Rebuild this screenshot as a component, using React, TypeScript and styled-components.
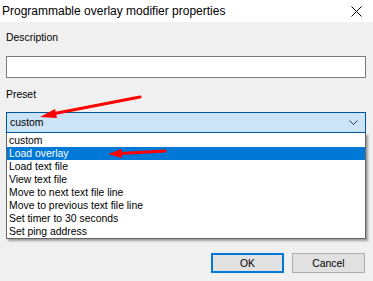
import styled, { createGlobalStyle } from 'styled-components';

const GlobalStyle = createGlobalStyle`
  html, body {
    margin: 0;
    padding: 0;
    background: #f0f0f0;
  }
  body {
    font-family: 'Liberation Sans', Arial, sans-serif;
    font-size: 10.4px;
    color: #000;
  }
`;

const presets = [
  'custom',
  'Load overlay',
  'Load text file',
  'View text file',
  'Move to next text file line',
  'Move to previous text file line',
  'Set timer to 30 seconds',
  'Set ping address',
];

export default function App() {
  return (
    <Dialog>
      <GlobalStyle />
      <TitleBar>
        <Title>Programmable overlay modifier properties</Title>
        <CloseButton>
          <svg width="11" height="11" viewBox="0 0 11 11">
            <path d="M0.5 0.5 L10.5 10.5 M10.5 0.5 L0.5 10.5" stroke="#000" strokeWidth="1" />
          </svg>
        </CloseButton>
      </TitleBar>

      <Body>
        <Label>Description</Label>
        <TextInput />

        <Label $top={9}>Preset</Label>
        <SelectWrap>
          <Select>
            <span>custom</span>
            <svg width="9" height="5" viewBox="0 0 9 5">
              <path d="M0.5 0.5 L4.5 4.5 L8.5 0.5" stroke="#333" fill="none" />
            </svg>
          </Select>
          <List>
            {presets.map((p) => (
              <Item key={p} $selected={p === 'Load overlay'}>
                {p}
              </Item>
            ))}
          </List>
        </SelectWrap>

        <Buttons>
          <Button $primary>OK</Button>
          <Button>Cancel</Button>
        </Buttons>
      </Body>

      <Arrows width="373" height="281" viewBox="0 0 373 281">
        <g stroke="#ff0000" strokeWidth="3" strokeLinecap="round" fill="#ff0000">
          <line x1="140" y1="97" x2="52" y2="114" />
          <polygon points="40,117 55,109 57,118" stroke="none" />
          <line x1="165" y1="151" x2="120" y2="153.5" />
          <polygon points="108,154 122,149 122,158" stroke="none" />
        </g>
      </Arrows>
    </Dialog>
  );
}

const Dialog = styled.div`
  position: relative;
  width: 373px;
  height: 281px;
  background: #f0f0f0;
  overflow: hidden;
`;

const TitleBar = styled.div`
  height: 22px;
  background: #fff;
  display: flex;
  align-items: center;
  justify-content: space-between;
`;

const Title = styled.div`
  padding-left: 2px;
  font-size: 12px;
  line-height: 16px;
`;

const CloseButton = styled.div`
  width: 32px;
  display: flex;
  justify-content: center;
  margin-right: 1px;
`;

const Body = styled.div`
  padding: 8px 7px 0 6px;
  display: flex;
  flex-direction: column;
`;

const Label = styled.div<{ $top?: number }>`
  margin-top: ${(p) => p.$top ?? 0}px;
  line-height: 16px;
  height: 16px;
`;

const TextInput = styled.div`
  margin-top: 10px;
  height: 20px;
  border: 1px solid #7a7a7a;
  background: #fff;
`;

const SelectWrap = styled.div`
  position: relative;
  margin-top: 9px;
`;

const Select = styled.div`
  height: 19px;
  line-height: 19px;
  border: 1px solid #005499;
  background: #cce4f7;
  display: flex;
  align-items: center;
  justify-content: space-between;
  padding: 0 7px 0 3px;
`;

const List = styled.div`
  position: absolute;
  top: 21px;
  left: 0;
  right: 0;
  padding-top: 1px;
  background: #fff;
  border: 1px solid #646464;
  border-top: none;
  box-shadow: 2px 2px 2px rgba(0, 0, 0, 0.35);
  z-index: 2;
`;

const Item = styled.div<{ $selected?: boolean }>`
  height: 13px;
  line-height: 14px;
  padding-left: 2px;
  white-space: nowrap;
  background: ${(p) => (p.$selected ? '#0078d7' : 'transparent')};
  color: ${(p) => (p.$selected ? '#fff' : '#000')};
`;

const Buttons = styled.div`
  display: flex;
  justify-content: flex-end;
  gap: 8px;
  margin-top: 120px;
  padding-right: 1px;
`;

const Button = styled.div<{ $primary?: boolean }>`
  width: 73px;
  height: 20px;
  box-sizing: border-box;
  display: flex;
  align-items: center;
  justify-content: center;
  background: #e1e1e1;
  border: ${(p) => (p.$primary ? '2px solid #0078d7' : '1px solid #adadad')};
`;

const Arrows = styled.svg`
  position: absolute;
  left: 0;
  top: 0;
  pointer-events: none;
  z-index: 5;
`;
